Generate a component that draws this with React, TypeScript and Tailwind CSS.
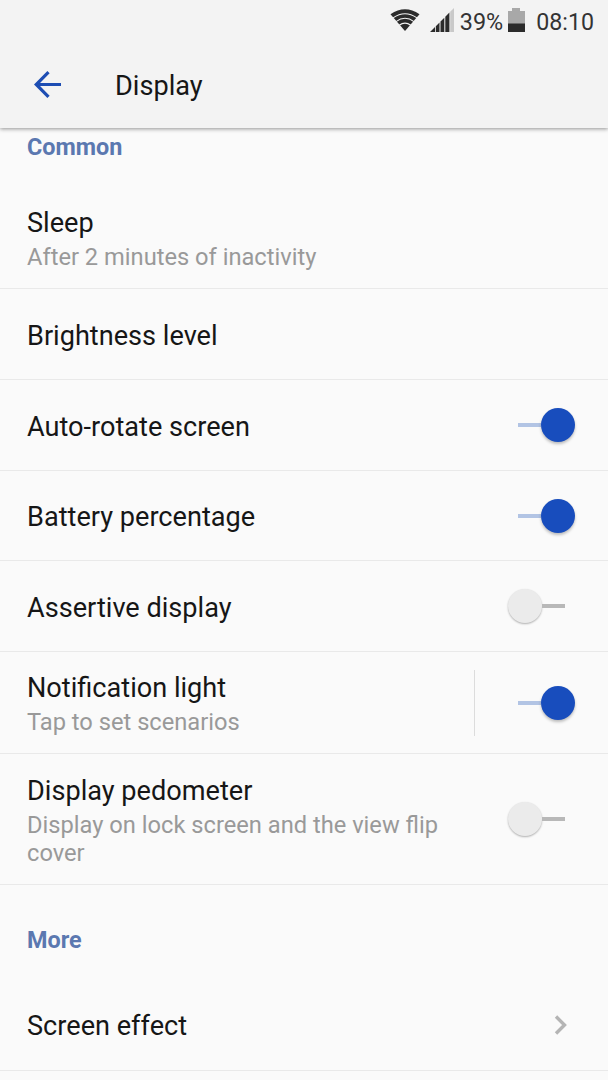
import React from "react";

type Setting = {
  title: string;
  description?: string;
  rowClass: string;
  textClass: string;
  enabled?: boolean;
  hasDivider?: boolean;
  hasChevron?: boolean;
};

const commonSettings: Setting[] = [
  {
    title: "Sleep",
    description: "After 2 minutes of inactivity",
    rowClass: "h-[118px]",
    textClass: "pt-[36px]",
  },
  { title: "Brightness level", rowClass: "h-[91px]", textClass: "pt-[31px]" },
  {
    title: "Auto-rotate screen",
    rowClass: "h-[91px]",
    textClass: "pt-[31px]",
    enabled: true,
  },
  {
    title: "Battery percentage",
    rowClass: "h-[90px]",
    textClass: "pt-[30px]",
    enabled: true,
  },
  {
    title: "Assertive display",
    rowClass: "h-[91px]",
    textClass: "pt-[31px]",
    enabled: false,
  },
  {
    title: "Notification light",
    description: "Tap to set scenarios",
    rowClass: "h-[102px]",
    textClass: "pt-[20px]",
    enabled: true,
    hasDivider: true,
  },
  {
    title: "Display pedometer",
    description: "Display on lock screen and the view flip cover",
    rowClass: "h-[131px]",
    textClass: "pt-[21px]",
    enabled: false,
  },
];

const moreSettings: Setting[] = [
  {
    title: "Screen effect",
    rowClass: "h-[91px]",
    textClass: "pt-[30px]",
    hasChevron: true,
  },
];

const Switch = ({ enabled }: { enabled: boolean }) => (
  <div
    className={`flex w-[67px] h-[34px] items-center ${
      enabled ? "flex-row-reverse" : ""
    }`}
  >
    <div
      className={`w-[34px] h-[34px] rounded-full ${
        enabled
          ? "bg-[#184dbd] shadow-[0_2px_3px_rgba(0,0,0,0.25)]"
          : "bg-[#ebebeb] shadow-[0_1px_2px_rgba(0,0,0,0.3)]"
      }`}
    />
    <div
      className={`w-[23px] h-[4px] ${enabled ? "bg-[#b2c4e4]" : "bg-[#b8b8b8]"}`}
    />
  </div>
);

const SettingRow = ({ setting }: { setting: Setting }) => (
  <div
    className={`flex items-center justify-between border-b border-[#e9e9e9] pl-[27px] pr-[33px] ${setting.rowClass}`}
  >
    <div className={`w-[420px] self-start ${setting.textClass}`}>
      <h3 className="text-[27.13px] leading-[32px] text-[#161616]">
        {setting.title}
      </h3>
      {setting.description && (
        <p className="mt-[4px] text-[23.68px] leading-[28px] text-[#999999]">
          {setting.description}
        </p>
      )}
    </div>
    {setting.enabled !== undefined && (
      <div className="flex items-center gap-x-[33px]">
        {setting.hasDivider && <div className="w-px h-[66px] bg-[#dcdcdc]" />}
        <Switch enabled={setting.enabled} />
      </div>
    )}
    {setting.hasChevron && (
      <svg width="14" height="20" viewBox="0 0 14 20" fill="none" stroke="#b4b4b4" strokeWidth="3.4" className="mr-[7px]">
        <path d="M2 1.5 L10.5 10 L2 18.5" />
      </svg>
    )}
  </div>
);

const StatusBar = () => (
  <div className="flex h-[42px] items-center justify-end pr-[14px] text-[#333333]">
    <svg width="30" height="22" viewBox="0 0 30 22" className="mr-[10px] -mt-[2px]">
      <path d="M15 22 L0.5 5.2 Q15 -4.6 29.5 5.2 Z" fill="#2b2b2b" />
      <g fill="none" stroke="#f3f3f3" strokeWidth="1.1">
        <path d="M3 8.9 Q15 0.6 27 8.9" />
        <path d="M6 12.6 Q15 6 24 12.6" />
        <path d="M9.2 16.3 Q15 12 20.8 16.3" />
      </g>
    </svg>
    <svg width="24" height="24" viewBox="0 0 24 24" className="mr-[6px] -mt-[2px]">
      <path d="M0 24 L5 19 V24 Z M5.8 24 V18.2 L9.5 14.5 V24 Z M10.5 24 V13.5 L14.3 9.7 V24 Z M15.3 24 V8.7 L19.4 4.6 V24 Z" fill="#2b2b2b" />
      <path d="M20.2 24 V3.8 L24 0 V24 Z" fill="#c9c9c9" />
    </svg>
    <span className="mt-[3px] text-[23.4px]">39%</span>
    <svg width="17" height="24" viewBox="0 0 17 24" className="ml-[5px] mr-[11px] -mt-[2px]">
      <path d="M0 3 H4 V0 H12 V3 H17 V16 H0 Z" fill="#a8a8a8" />
      <path d="M0 15.5 H17 V24 H0 Z" fill="#2b2b2b" />
    </svg>
    <span className="mt-[3px] text-[23.2px]">08:10</span>
  </div>
);

const App = () => {
  return (
    <div className="flex h-[1080px] w-[608px] flex-col overflow-hidden bg-[#fafafa] font-['Roboto',sans-serif]">
      <header className="relative h-[128px] shrink-0 bg-[#f3f3f3] shadow-[0_1px_4px_rgba(0,0,0,0.42)]">
        <StatusBar />
        <div className="flex h-[86px] items-center pl-[34px]">
          <svg width="27" height="27" viewBox="0 0 27 27" fill="none" stroke="#1d4db3" strokeWidth="3.2" className="-mt-[2px]">
            <path d="M14.5 1.2 L2.2 13.5 L14.5 25.8 M2.2 13.5 H27" />
          </svg>
          <h1 className="ml-[54px] mt-[2px] text-[27.13px] leading-[32px] text-[#161616]">
            Display
          </h1>
        </div>
      </header>

      <main>
        <h2 className="h-[43px] pt-[5px] pl-[27px] text-[23.4px] leading-[28px] font-bold text-[#5b78b0]">
          Common
        </h2>
        {commonSettings.map((setting) => (
          <SettingRow key={setting.title} setting={setting} />
        ))}
        <h2 className="h-[95px] pt-[41px] pl-[27px] text-[23.4px] leading-[28px] font-bold text-[#5b78b0]">
          More
        </h2>
        {moreSettings.map((setting) => (
          <SettingRow key={setting.title} setting={setting} />
        ))}
      </main>
    </div>
  );
};

export default App;
